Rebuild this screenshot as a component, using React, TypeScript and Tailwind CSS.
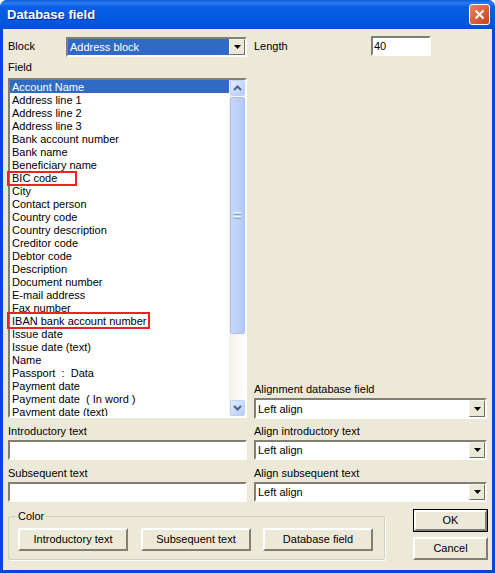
const FIELDS = [
  "Account Name",
  "Address line 1",
  "Address line 2",
  "Address line 3",
  "Bank account number",
  "Bank name",
  "Beneficiary name",
  "BIC code",
  "City",
  "Contact person",
  "Country code",
  "Country description",
  "Creditor code",
  "Debtor code",
  "Description",
  "Document number",
  "E-mail address",
  "Fax number",
  "IBAN bank account number",
  "Issue date",
  "Issue date (text)",
  "Name",
  "Passport  :  Data",
  "Payment date",
  "Payment date  ( In word )",
  "Payment date (text)",
];

const SUNKEN = "border-2 border-t-[#817f73] border-l-[#817f73] border-b-white border-r-white bg-white";

function DropArrow() {
  return (
    <div className="w-[16px] h-full bg-[#ece9d8] border border-[#f5f4ec] border-r-[#716f64] border-b-[#716f64] flex items-center justify-center">
      <svg width="7" height="4" viewBox="0 0 7 4">
        <path d="M0 0h7L3.5 4z" fill="#000" />
      </svg>
    </div>
  );
}

function Combo({ value, selected, className }: { value: string; selected?: boolean; className: string }) {
  return (
    <div className={`${SUNKEN} flex items-stretch ${className}`}>
      <div className={`flex-1 flex items-center pl-[2px] pt-[1px] ${selected ? "bg-[#316ac5] text-white" : ""}`}>{value}</div>
      <DropArrow />
    </div>
  );
}

function RaisedButton({ label, className }: { label: string; className: string }) {
  return (
    <div className={`flex items-center justify-center bg-[#ece9d8] border-2 border-t-white border-l-white border-b-[#817f73] border-r-[#817f73] ${className}`}>
      {label}
    </div>
  );
}

function ScrollButton({ up }: { up?: boolean }) {
  return (
    <div className="h-[16px] ml-[1px] rounded-[2px] border border-[#bcd0f5] bg-gradient-to-br from-[#e4edfd] to-[#b5cbf5] flex items-center justify-center">
      <svg width="9" height="6" viewBox="0 0 9 6">
        <path d={up ? "M1 5l3.5-3.5L8 5" : "M1 1l3.5 3.5L8 1"} fill="none" stroke="#4d6185" strokeWidth="2" />
      </svg>
    </div>
  );
}

function Scrollbar() {
  return (
    <div className="w-[16px] h-full bg-gradient-to-r from-[#f3f1ec] to-[#fefefb] flex flex-col">
      <ScrollButton up />
      <div className="mt-[1px] h-[237px] ml-[1px] rounded-[2px] border border-[#a9c1f0] bg-gradient-to-r from-[#c9d8fb] to-[#b4c9f6] flex flex-col items-center justify-center gap-[1px]">
        <div className="w-[7px] h-[1px] bg-[#eef3fe]" />
        <div className="w-[7px] h-[1px] bg-[#8faae0]" />
        <div className="w-[7px] h-[1px] bg-[#eef3fe]" />
        <div className="w-[7px] h-[1px] bg-[#8faae0]" />
      </div>
      <div className="flex-1" />
      <ScrollButton />
    </div>
  );
}

export default function App() {
  return (
    <div
      className="relative w-[495px] h-[573px] overflow-hidden rounded-t-[7px] bg-[#0047d5] text-[11px] text-black"
      style={{ fontFamily: '"Liberation Sans", Arial, sans-serif' }}
    >
      {/* title bar */}
      <div className="h-[29px] flex items-center justify-between pl-[7px] pr-[5px] bg-[linear-gradient(#0a5ad8_0px,#2a7cf0_3px,#0a5ee6_7px,#0258e0_20px,#0050dc_29px)]">
        <span className="text-white font-bold text-[13px] [text-shadow:1px_1px_0_#0a2a88]">Database field</span>
        <div className="w-[21px] h-[21px] rounded-[3px] border border-white bg-gradient-to-br from-[#e9825f] to-[#c8401a] flex items-center justify-center">
          <svg width="11" height="11" viewBox="0 0 11 11">
            <path d="M1.5 1.5l8 8M9.5 1.5l-8 8" stroke="#fff" strokeWidth="2" />
          </svg>
        </div>
      </div>

      {/* dialog body */}
      <div className="relative mx-[3px] h-[541px] bg-[#ece9d8] pl-[5px] pr-[7px]">
        <div className="grid grid-cols-[239px_233px] gap-x-[7px]">
          {/* left column */}
          <div>
            <div className="flex items-start h-[31px] pt-[8px]">
              <span className="w-[58px] pt-[2px] leading-[14px]">Block</span>
              <Combo value="Address block" selected className="w-[181px] h-[20px]" />
            </div>
            <div className="h-[18px] pt-[1px] leading-[13px]">Field</div>
            <div className={`${SUNKEN} h-[340px] flex overflow-hidden`}>
              <div className="flex-1 overflow-hidden">
                {FIELDS.map((name, i) => (
                  <div
                    key={name}
                    className={`h-[13px] leading-[15px] pl-[2px] whitespace-pre ${i === 0 ? "bg-[#316ac5] text-white" : ""}`}
                  >
                    {name}
                  </div>
                ))}
              </div>
              <Scrollbar />
            </div>
            <div className="h-[22px] pt-[6px] leading-[14px]">Introductory text</div>
            <div className={`${SUNKEN} h-[20px]`} />
            <div className="h-[22px] pt-[6px] leading-[14px]">Subsequent text</div>
            <div className={`${SUNKEN} h-[20px]`} />
          </div>

          {/* right column */}
          <div className="flex flex-col">
            <div className="flex items-start h-[36px] pt-[7px]">
              <span className="w-[117px] pt-[3px] leading-[14px]">Length</span>
              <div className={`${SUNKEN} w-[60px] h-[20px] pl-[1px] leading-[16px]`}>40</div>
            </div>
            <div className="h-[333px] flex flex-col justify-end leading-[14px] pb-[2px]">Alignment database field</div>
            <Combo value="Left align" className="h-[21px]" />
            <div className="h-[21px] pt-[5px] leading-[14px]">Align introductory text</div>
            <Combo value="Left align" className="h-[20px]" />
            <div className="h-[22px] pt-[6px] leading-[14px]">Align subsequent text</div>
            <Combo value="Left align" className="h-[20px]" />
          </div>
        </div>

        {/* bottom row */}
        <div className="flex justify-between mt-[7px]">
          <fieldset className="w-[377px] h-[50px] mt-[1px] border border-[#d0d0bf] rounded-[2px] shadow-[1px_1px_0_#fff] px-[9px] flex-none">
            <legend className="ml-[-1px] px-[1px] leading-[12px]">Color</legend>
            <div className="flex mt-[6px]">
              <RaisedButton label="Introductory text" className="w-[110px] h-[23px]" />
              <RaisedButton label="Subsequent text" className="w-[110px] h-[23px] ml-[13px]" />
              <RaisedButton label="Database field" className="w-[110px] h-[23px] ml-[12px]" />
            </div>
          </fieldset>
          <div className="flex flex-col gap-[5px] mr-[-3px]">
            <div className="w-[75px] h-[23px] border border-black">
              <RaisedButton label="OK" className="w-full h-full" />
            </div>
            <RaisedButton label="Cancel" className="w-[75px] h-[23px]" />
          </div>
        </div>

        {/* red annotation boxes */}
        <div className="absolute left-[4px] top-[142px] w-[70px] h-[15px] border-2 border-[#ee2222]" />
        <div className="absolute left-[4px] top-[283px] w-[143px] h-[17px] border-2 border-[#ee2222]" />
      </div>
    </div>
  );
}
